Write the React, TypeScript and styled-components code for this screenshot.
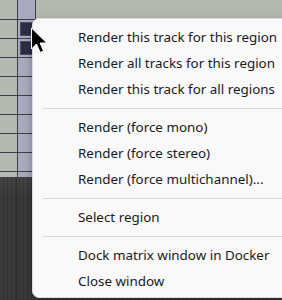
import React from "react";
import { styled, createGlobalStyle } from "styled-components";

const GlobalStyle = createGlobalStyle`
  html, body {
    margin: 0;
    padding: 0;
    overflow: hidden;
    background: #3b3b3b;
  }
`;

const Stage = styled.div`
  position: relative;
  width: 282px;
  height: 300px;
  overflow: hidden;
  display: flex;
  flex-direction: column;
  font-family: "Noto Sans", "Liberation Sans", sans-serif;
`;

const TrackGrid = styled.div`
  height: 177px;
  flex: none;
  display: grid;
  grid-template-columns: 17px 17px 1fr;
  grid-template-rows: 19px;
  grid-auto-rows: 18px;
  gap: 1px;
  overflow: hidden;
  background: #3c3f45;
`;

const Cell = styled.div<{ $tone: "green" | "lavender" }>`
  background: ${(p) => (p.$tone === "green" ? "#b4b9b0" : "#a8aabe")};
  display: flex;
  padding: 2px;
`;

const ActiveBlock = styled.div`
  flex: 1;
  background: #2c2e43;
  border: 1px solid #4b4e66;
`;

const LowerPanel = styled.div`
  flex: 1;
  position: relative;
  background-color: #3d3d3d;
  background-image:
    linear-gradient(to bottom, rgba(255, 255, 255, 0.05), rgba(255, 255, 255, 0) 18px),
    linear-gradient(to right, transparent 16px, #2a2a2a 16px, #2a2a2a 17px, transparent 17px),
    repeating-linear-gradient(to bottom, rgba(0, 0, 0, 0.12) 0 1px, transparent 1px 2px),
    repeating-linear-gradient(to right, transparent 0 3px, rgba(0, 0, 0, 0.14) 3px 4px);
`;

const Menu = styled.div`
  position: absolute;
  top: 18px;
  left: 32px;
  width: 262px;
  padding: 5px 0 3px;
  background: #f9f9f9;
  border: 1px solid #dcdcdc;
  border-radius: 7px;
  box-shadow: 0 3px 8px rgba(0, 0, 0, 0.3);
  box-sizing: border-box;
`;

const MenuItem = styled.div`
  height: 26px;
  display: flex;
  align-items: center;
  padding-left: 45px;
  font-size: 13.4px;
  color: #1a1a1a;
  white-space: nowrap;
`;

const Separator = styled.div`
  height: 1px;
  margin: 6px 0 5px 10px;
  background: #d6d6d6;
`;

const Cursor = styled.svg`
  position: absolute;
  top: 27px;
  left: 30px;
  width: 18px;
  height: 27px;
`;

type Entry = string | null;

const entries: Entry[] = [
  "Render this track for this region",
  "Render all tracks for this region",
  "Render this track for all regions",
  null,
  "Render (force mono)",
  "Render (force stereo)",
  "Render (force multichannel)...",
  null,
  "Select region",
  null,
  "Dock matrix window in Docker",
  "Close window",
];

const ROWS = 10;

export default function App() {
  const cells: React.ReactNode[] = [];
  for (let r = 0; r < ROWS; r++) {
    for (let c = 0; c < 3; c++) {
      const tone = c === 1 ? "lavender" : "green";
      const active = c === 1 && (r === 1 || r === 2);
      cells.push(
        <Cell key={`${r}-${c}`} $tone={tone}>
          {active && <ActiveBlock />}
        </Cell>
      );
    }
  }

  return (
    <Stage>
      <GlobalStyle />
      <TrackGrid>{cells}</TrackGrid>
      <LowerPanel />
      <Menu>
        {entries.map((e, i) =>
          e === null ? <Separator key={i} /> : <MenuItem key={i}>{e}</MenuItem>
        )}
      </Menu>
      <Cursor viewBox="0 0 18 27">
        <path
          d="M1.5 1 L1.5 22 L6.5 17 L10.2 25.5 L13.6 24 L10 16 L16.8 16 Z"
          fill="#000"
          stroke="#fff"
          strokeWidth="1"
          strokeLinejoin="round"
        />
      </Cursor>
    </Stage>
  );
}
